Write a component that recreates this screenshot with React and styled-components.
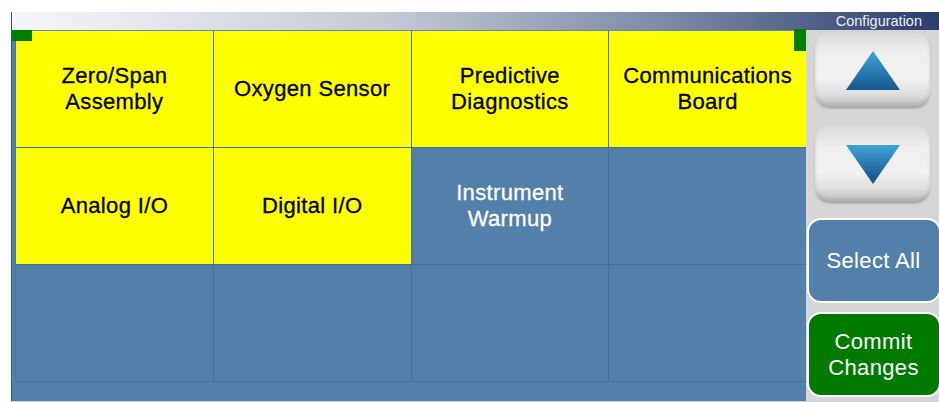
import React from 'react';
import styled, { createGlobalStyle } from 'styled-components';

const GlobalStyle = createGlobalStyle`
  html, body {
    margin: 0;
    padding: 0;
    background: #ffffff;
  }
  body {
    font-family: 'Liberation Sans', Arial, sans-serif;
  }
`;

const cells = [
  { label: ['Zero/Span', 'Assembly'], active: true },
  { label: ['Oxygen Sensor'], active: true },
  { label: ['Predictive', 'Diagnostics'], active: true },
  { label: ['Communications', 'Board'], active: true },
  { label: ['Analog I/O'], active: true },
  { label: ['Digital I/O'], active: true },
  { label: ['Instrument', 'Warmup'], active: false },
  { label: [], active: false },
  { label: [], active: false },
  { label: [], active: false },
  { label: [], active: false },
  { label: [], active: false },
];

const Arrow = ({ down }) => (
  <svg width="54" height="39" viewBox="0 0 54 39">
    <defs>
      <linearGradient id={down ? 'arrowDown' : 'arrowUp'} x1="0" y1="0" x2="0" y2="1">
        <stop offset="0" stopColor="#3ea4d6" />
        <stop offset="1" stopColor={down ? '#184c82' : '#175690'} />
      </linearGradient>
    </defs>
    <polygon
      points={down ? '0,0 54,0 27,39' : '27,0 54,39 0,39'}
      fill={`url(#${down ? 'arrowDown' : 'arrowUp'})`}
    />
  </svg>
);

const App = () => {
  return (
    <Screen>
      <GlobalStyle />
      <Frame>
        <Header>Configuration</Header>
        <Body>
          <Panel>
            <CornerMark />
            <Grid>
              {cells.map((cell, i) => (
                <Cell key={i} $active={cell.active}>
                  {i === 3 && <SideMark />}
                  {cell.label.map((line) => (
                    <span key={line}>{line}</span>
                  ))}
                </Cell>
              ))}
            </Grid>
          </Panel>
          <Sidebar>
            <ScrollButton $top={2} $height={76}>
              <Arrow />
            </ScrollButton>
            <ScrollButton $top={17} $height={78}>
              <Arrow down />
            </ScrollButton>
            <ActionButton $top={15} $color="#5380ab">
              Select All
            </ActionButton>
            <ActionButton $top={9} $color="#007a00">
              <span>Commit</span>
              <span>Changes</span>
            </ActionButton>
          </Sidebar>
        </Body>
      </Frame>
    </Screen>
  );
};

const Screen = styled.div`
  width: 939px;
  height: 402px;
  overflow: hidden;
  padding: 12px 0 0 11px;
  box-sizing: border-box;
`;

const Frame = styled.div`
  width: 928px;
  height: 389px;
  display: flex;
  flex-direction: column;
  border-bottom: 1px solid #c7d3df;
`;

const Header = styled.div`
  height: 18px;
  flex: none;
  display: flex;
  align-items: flex-end;
  justify-content: flex-end;
  padding-right: 17px;
  box-sizing: border-box;
  background: linear-gradient(
    to right,
    #f6f7f9 0%,
    #c4cad6 40%,
    #7d8ba9 70%,
    #2b3d6c 100%
  );
  border-left: 1px solid #2b5a85;
  color: #eceef4;
  font-size: 14.5px;
  line-height: 17px;
`;

const Body = styled.div`
  flex: 1;
  display: flex;
  min-height: 0;
`;

const Panel = styled.div`
  position: relative;
  width: 795px;
  flex: none;
  background: #5380ab;
  border-left: 1px solid #2b5a85;
  border-top: 1px solid #5b8ab8;
  padding: 0 0 18px 3px;
  box-sizing: border-box;
`;

const CornerMark = styled.div`
  position: absolute;
  left: 0;
  top: -1px;
  width: 20px;
  height: 11px;
  background: #007f00;
  z-index: 2;
`;

const SideMark = styled.div`
  position: absolute;
  right: 0;
  top: -2px;
  width: 12px;
  height: 22px;
  background: #007f00;
`;

const Grid = styled.div`
  display: grid;
  grid-template-columns: repeat(4, 1fr);
  grid-template-rows: repeat(3, 116px);
  gap: 1px;
  background: #46709a;
  border-bottom: 1px solid #46709a;
  border-left: 1px solid #46709a;
`;

const Cell = styled.div`
  position: relative;
  display: flex;
  flex-direction: column;
  align-items: center;
  justify-content: center;
  background: ${(p) => (p.$active ? '#ffff00' : '#5380ab')};
  color: ${(p) => (p.$active ? '#000000' : '#ffffff')};
  font-size: 22px;
  line-height: 26px;
  letter-spacing: 0.35px;
  -webkit-text-stroke: 0.3px currentColor;
  text-align: center;
`;

const Sidebar = styled.div`
  flex: 1;
  background: #d6d6d6;
  display: flex;
  flex-direction: column;
  overflow: hidden;
  padding-left: 9px;
  box-sizing: border-box;
`;

const ScrollButton = styled.div`
  width: 115px;
  height: ${(p) => p.$height}px;
  margin-top: ${(p) => p.$top}px;
  flex: none;
  border-radius: 15px;
  display: flex;
  align-items: center;
  justify-content: center;
  background: linear-gradient(
    to bottom,
    #d9d9d9 0%,
    #efefef 30%,
    #f1f1f1 60%,
    #dedede 82%,
    #b9b9b9 100%
  );
  box-shadow: inset 0 -3px 4px rgba(0, 0, 0, 0.12), 0 1px 2px rgba(0, 0, 0, 0.15);
`;

const ActionButton = styled.div`
  width: 134px;
  height: 85px;
  margin-top: ${(p) => p.$top}px;
  margin-left: -8px;
  flex: none;
  box-sizing: border-box;
  border: 2px solid #ffffff;
  border-radius: 14px;
  background: ${(p) => p.$color};
  color: #ffffff;
  display: flex;
  flex-direction: column;
  align-items: center;
  justify-content: center;
  padding-right: 1px;
  font-size: 22px;
  line-height: 26px;
  letter-spacing: 0.35px;
  text-align: center;
`;

export default App;
